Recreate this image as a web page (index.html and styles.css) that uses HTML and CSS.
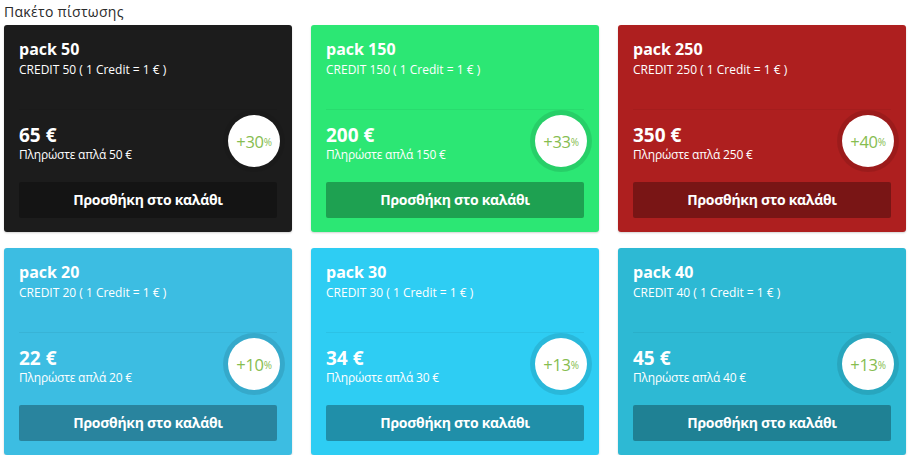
FILE: index.html
```html
<!DOCTYPE html>
<html lang="el">
<head>
<meta charset="utf-8">
<title>Πακέτο πίστωσης</title>
<link rel="stylesheet" href="styles.css">
</head>
<body>
<div class="page">
  <h1 class="page-title">Πακέτο πίστωσης</h1>
  <div class="grid">
    <div class="card card-black">
      <div class="card-head">
        <div class="card-title">pack 50</div>
        <div class="card-sub">CREDIT 50 ( 1 Credit = 1 € )</div>
      </div>
      <div class="price-row">
        <div class="price-text">
          <div class="price">65 €</div>
          <div class="pay">Πληρώστε απλά 50 €</div>
        </div>
        <div class="bonus">+30<span class="pct">%</span></div>
      </div>
      <div class="btn">Προσθήκη στο καλάθι</div>
    </div>
    <div class="card card-green">
      <div class="card-head">
        <div class="card-title">pack 150</div>
        <div class="card-sub">CREDIT 150 ( 1 Credit = 1 € )</div>
      </div>
      <div class="price-row">
        <div class="price-text">
          <div class="price">200 €</div>
          <div class="pay">Πληρώστε απλά 150 €</div>
        </div>
        <div class="bonus">+33<span class="pct">%</span></div>
      </div>
      <div class="btn">Προσθήκη στο καλάθι</div>
    </div>
    <div class="card card-red">
      <div class="card-head">
        <div class="card-title">pack 250</div>
        <div class="card-sub">CREDIT 250 ( 1 Credit = 1 € )</div>
      </div>
      <div class="price-row">
        <div class="price-text">
          <div class="price">350 €</div>
          <div class="pay">Πληρώστε απλά 250 €</div>
        </div>
        <div class="bonus">+40<span class="pct">%</span></div>
      </div>
      <div class="btn">Προσθήκη στο καλάθι</div>
    </div>
    <div class="card card-blue1">
      <div class="card-head">
        <div class="card-title">pack 20</div>
        <div class="card-sub">CREDIT 20 ( 1 Credit = 1 € )</div>
      </div>
      <div class="price-row">
        <div class="price-text">
          <div class="price">22 €</div>
          <div class="pay">Πληρώστε απλά 20 €</div>
        </div>
        <div class="bonus">+10<span class="pct">%</span></div>
      </div>
      <div class="btn">Προσθήκη στο καλάθι</div>
    </div>
    <div class="card card-blue2">
      <div class="card-head">
        <div class="card-title">pack 30</div>
        <div class="card-sub">CREDIT 30 ( 1 Credit = 1 € )</div>
      </div>
      <div class="price-row">
        <div class="price-text">
          <div class="price">34 €</div>
          <div class="pay">Πληρώστε απλά 30 €</div>
        </div>
        <div class="bonus">+13<span class="pct">%</span></div>
      </div>
      <div class="btn">Προσθήκη στο καλάθι</div>
    </div>
    <div class="card card-blue3">
      <div class="card-head">
        <div class="card-title">pack 40</div>
        <div class="card-sub">CREDIT 40 ( 1 Credit = 1 € )</div>
      </div>
      <div class="price-row">
        <div class="price-text">
          <div class="price">45 €</div>
          <div class="pay">Πληρώστε απλά 40 €</div>
        </div>
        <div class="bonus">+13<span class="pct">%</span></div>
      </div>
      <div class="btn">Προσθήκη στο καλάθι</div>
    </div>
  </div>
</div>
</body>
</html>
```
FILE: styles.css
```css
* { box-sizing: border-box; }
html, body { margin: 0; padding: 0; background: #fff; }
body { font-family: "Open Sans", "DejaVu Sans", sans-serif; color: #222; }

.page { padding: 2px 0 0 4px; }

.page-title {
  margin: 0 0 3px;
  font-size: 14px;
  line-height: 20px;
  font-weight: 400;
  letter-spacing: 0.3px;
  color: #2a2a2a;
}

.grid {
  display: grid;
  grid-template-columns: repeat(3, 288px);
  column-gap: 19px;
  row-gap: 16px;
}

.card {
  padding: 13px 15px 14px;
  border-radius: 3px;
  color: #fff;
  box-shadow: 0 1px 2px rgba(0, 0, 0, 0.18);
}

.card-black { background: #1c1c1c; }
.card-green { background: #2ce774; }
.card-red { background: #ae1f1f; }
.card-blue1 { background: #3cbde2; }
.card-blue2 { background: #2ecdf3; }
.card-blue3 { background: #2db9d4; }

.card-head {
  height: 72px;
  border-bottom: 1px solid rgba(0, 0, 0, 0.05);
}

.card-title {
  font-size: 16px;
  line-height: 23px;
  font-weight: 700;
}

.card-sub {
  font-size: 12px;
  line-height: 18px;
}

.price-row {
  display: flex;
  align-items: center;
  justify-content: space-between;
  height: 62px;
}

.price-text { margin-top: 2px; }

.price {
  font-size: 19px;
  line-height: 24px;
  font-weight: 700;
}

.pay {
  font-size: 12px;
  line-height: 15px;
  letter-spacing: -0.2px;
}

.bonus {
  width: 62px;
  height: 62px;
  margin-right: -8px;
  border-radius: 50%;
  border: 5px solid rgba(0, 0, 0, 0.1);
  background: #fff;
  background-clip: padding-box;
  color: #86bd50;
  font-size: 16.5px;
  display: flex;
  align-items: center;
  justify-content: center;
  letter-spacing: -0.3px;
}

.bonus .pct { font-size: 10px; margin-top: 2px; }

.card-black .bonus { border-color: rgba(0, 0, 0, 0.06); }

.btn {
  margin-top: 10px;
  height: 36px;
  line-height: 36px;
  text-align: center;
  font-size: 14px;
  font-weight: 700;
  letter-spacing: -0.3px;
  background: rgba(0, 0, 0, 0.3);
  border-radius: 2px;
}
.card-black .btn { background: rgba(0, 0, 0, 0.28); }
```
